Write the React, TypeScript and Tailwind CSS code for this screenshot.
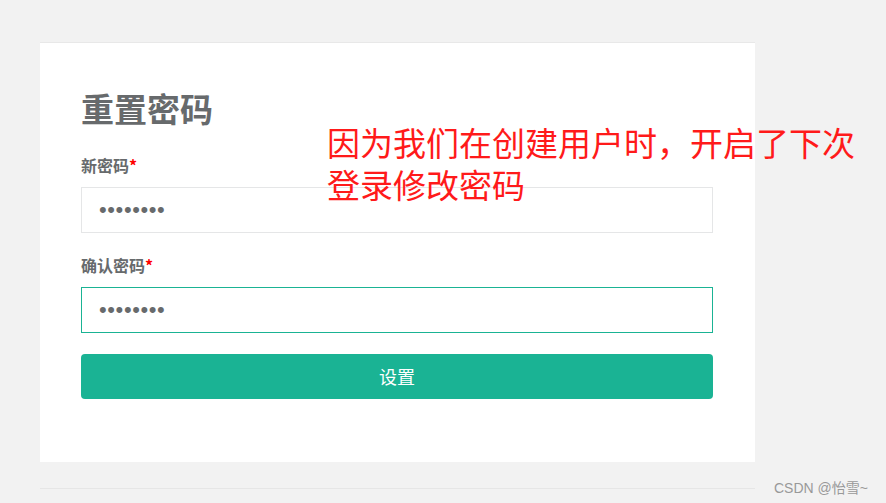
import React from "react";

const cjk = { fontFamily: '"Noto Sans CJK SC", "Noto Sans", sans-serif' };
const pw = { fontFamily: '"Liberation Sans", Arial, sans-serif' };

export default function App() {
  return (
    <div className="relative w-[886px] h-[503px] overflow-hidden bg-[#f2f2f2]" style={cjk}>
      <div className="pt-[42px] pl-[40px]">
        <div className="w-[715px] h-[420px] bg-white border-t border-[#e8e8e8] pt-[49px] px-[41px] flex flex-col">
          <h1 className="text-[33px] leading-none font-bold text-[#676a6c]">重置密码</h1>
          <label className="mt-[32px] text-[16px] leading-none font-bold text-[#676a6c]">
            新密码<span className="text-[#ff0000]">*</span>
          </label>
          <input
            type="password"
            readOnly
            defaultValue="12345678"
            style={pw}
            className="mt-[14px] w-[632px] h-[46px] border border-[#e5e6e7] pl-[17px] pr-[18px] text-[22px] text-[#676a6c] tracking-[0.6px] outline-none"
          />
          <label className="mt-[24px] text-[16px] leading-none font-bold text-[#676a6c]">
            确认密码<span className="text-[#ff0000]">*</span>
          </label>
          <input
            type="password"
            readOnly
            defaultValue="12345678"
            style={pw}
            className="mt-[14px] w-[632px] h-[46px] border border-[#1ab394] pl-[17px] pr-[18px] text-[22px] text-[#676a6c] tracking-[0.6px] outline-none"
          />
          <button className="mt-[21px] w-[632px] h-[45px] rounded-[4px] bg-[#1ab394] text-white text-[18px]">
            设置
          </button>
        </div>
        <div className="w-[715px] mt-[26px] border-t border-[#e6e6e6]" />
      </div>

      <div className="absolute left-[327px] top-[121px] text-[33px] leading-[42px] text-[#ff1a1a]">
        因为我们在创建用户时，开启了下次
        <br />
        登录修改密码
      </div>

      <div
        className="absolute left-[774px] top-[478px] text-[14px] text-[#999999]"
        style={{ fontFamily: '"Liberation Sans", "Noto Sans CJK SC", sans-serif' }}
      >
        CSDN @怡雪~
      </div>
    </div>
  );
}
